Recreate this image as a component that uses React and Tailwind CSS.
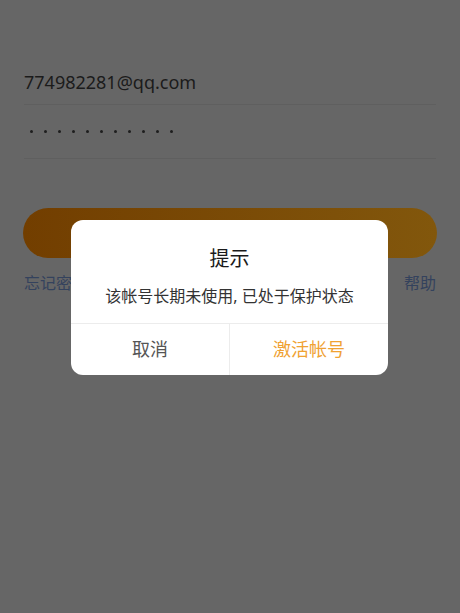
const cjk = { fontFamily: '"Noto Sans", "Noto Sans CJK SC", sans-serif' };

const Dots = ({ count }) => {
  return (
    <div className="flex items-center gap-[11px] pl-[6px]">
      {Array.from({ length: count }).map((_, i) => (
        <span key={i} className="block w-[3px] h-[3px] rounded-full bg-[#1e1e1e]" />
      ))}
    </div>
  );
};

const App = () => {
  return (
    <div className="relative w-[460px] h-[613px] bg-[#666666] overflow-hidden" style={cjk}>
      {/* login page behind the mask */}
      <div className="flex flex-col px-6 pt-[59px]">
        <div className="h-[46px] flex items-center border-b border-[#5f5f5f]">
          <span className="text-[18px] text-[#1b1b1b] leading-none">
            774982281@qq.com
          </span>
        </div>
        <div className="h-[54px] flex items-center border-b border-[#5f5f5f]">
          <Dots count={11} />
        </div>
        <div className="mt-[49px] -mx-px h-[50px] rounded-full bg-linear-to-r/srgb from-[#723e00] to-[#82570c]"></div>
        <div className="flex justify-between mt-[17px] text-[16px] text-[#34425d] leading-none">
          <span>忘记密码</span>
          <span>帮助</span>
        </div>
      </div>

      {/* dialog */}
      <div className="absolute left-[71px] top-[220px] w-[317px] h-[155px] bg-white rounded-[12px] flex flex-col">
        <div className="flex flex-col items-center pt-[29px] h-[103px]">
          <div className="text-[20px] text-[#1a1a1a] leading-none">提示</div>
          <div className="mt-[19px] text-[16px] text-[#333333] leading-none">
            该帐号长期未使用, 已处于保护状态
          </div>
        </div>
        <div className="flex flex-1 border-t border-[#ececec]">
          <button className="flex-1 flex items-center justify-center text-[18px] text-[#555555]">
            取消
          </button>
          <div className="w-px bg-[#ececec]"></div>
          <button className="flex-1 flex items-center justify-center text-[18px] text-[#f0a232]">
            激活帐号
          </button>
        </div>
      </div>
    </div>
  );
};

export default App;
